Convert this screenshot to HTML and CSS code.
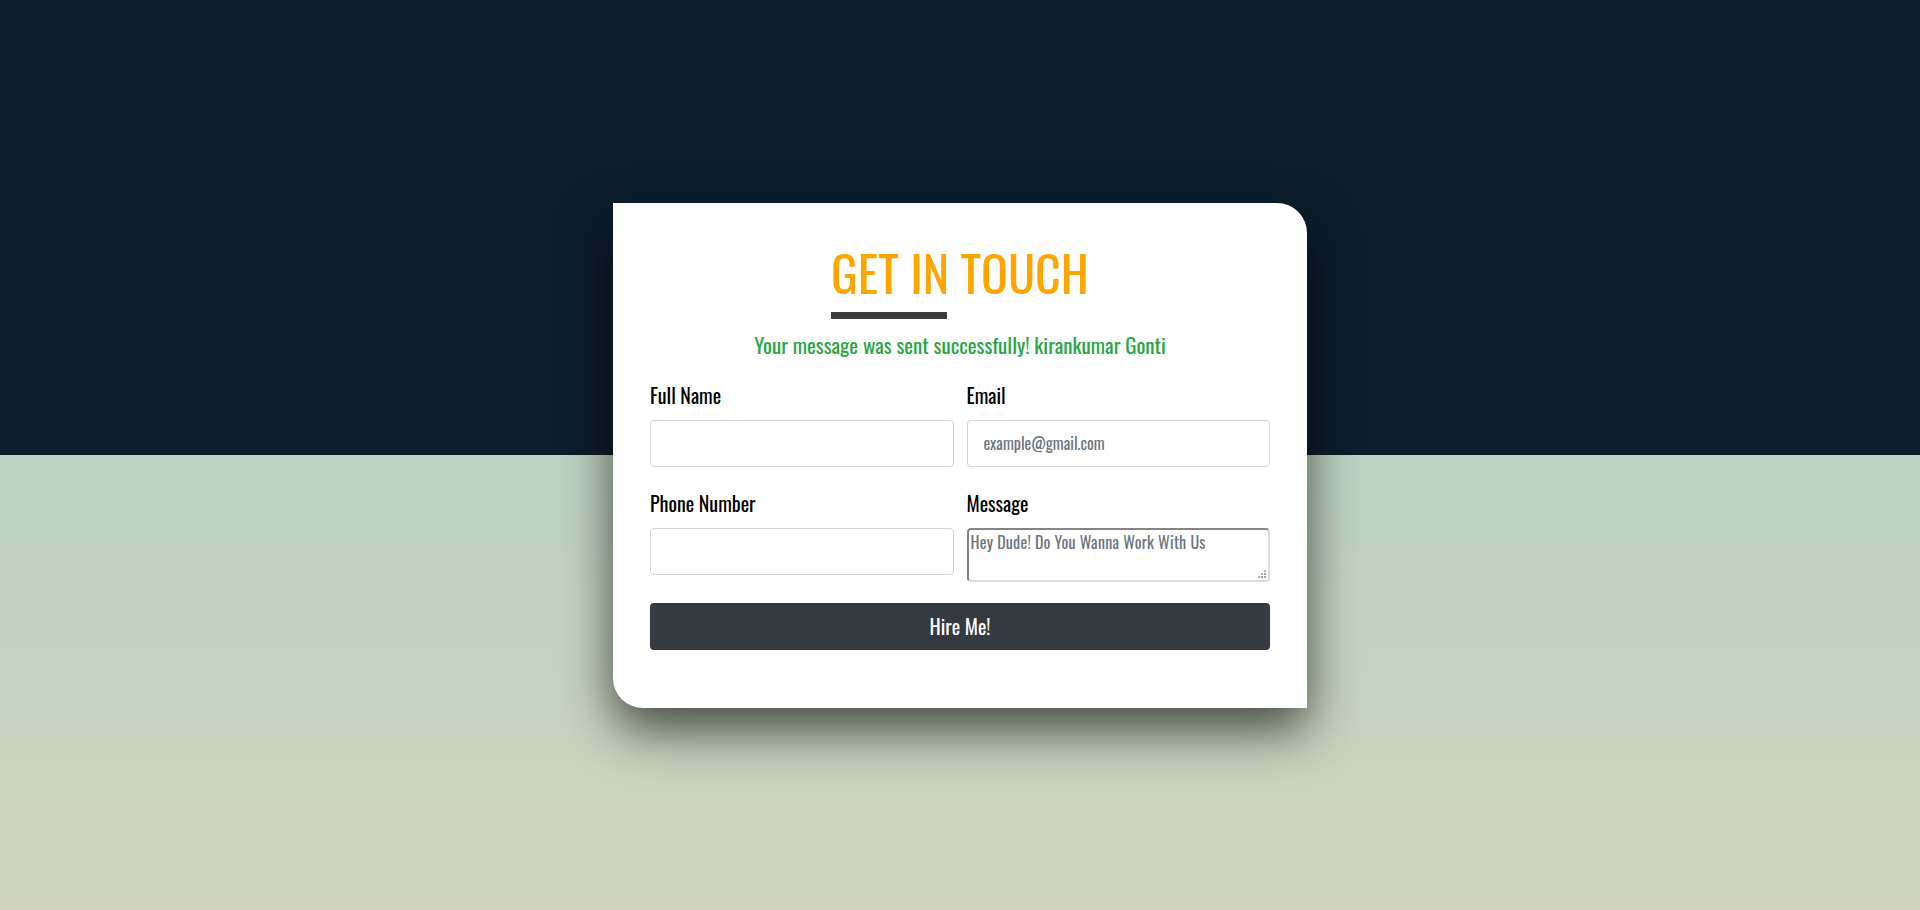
FILE: index.html
```html
<!DOCTYPE html>
<html lang="en">
<head>
<meta charset="utf-8">
<title>Get In Touch</title>
<link rel="stylesheet" href="styles.css">
</head>
<body>
<main class="page">
  <section class="card">
    <div class="heading">
      <div class="heading-inner">
        <h1 class="title">GET IN TOUCH</h1>
        <div class="bar"></div>
      </div>
    </div>
    <p class="success">Your message was sent successfully! kirankumar Gonti</p>
    <form class="form">
      <div class="field">
        <label class="label">Full Name</label>
        <input class="input" type="text">
      </div>
      <div class="field">
        <label class="label">Email</label>
        <input class="input" type="email" placeholder="example@gmail.com">
      </div>
      <div class="field">
        <label class="label">Phone Number</label>
        <input class="input" type="text">
      </div>
      <div class="field">
        <label class="label">Message</label>
        <div class="textarea-wrap">
          <textarea class="textarea" placeholder="Hey Dude! Do You Wanna Work With Us"></textarea>
          <svg class="grip" width="10" height="10" viewBox="0 0 10 10" aria-hidden="true">
            <rect x="8" y="2" width="2" height="2" fill="#b0b0b0"/>
            <rect x="5" y="5" width="2" height="2" fill="#b0b0b0"/>
            <rect x="8" y="5" width="2" height="2" fill="#a0a0a0"/>
            <rect x="2" y="8" width="2" height="2" fill="#b0b0b0"/>
            <rect x="5" y="8" width="2" height="2" fill="#a0a0a0"/>
            <rect x="8" y="8" width="2" height="2" fill="#a0a0a0"/>
          </svg>
        </div>
      </div>
      <button class="button" type="button">Hire Me!</button>
    </form>
  </section>
</main>
</body>
</html>
```

FILE: styles.css
```css
html, body {
  margin: 0;
  padding: 0;
}

body {
  font-family: "Oswald", "Liberation Sans Narrow", "DejaVu Sans Condensed", sans-serif;
  background: linear-gradient(to bottom, #0c1e2c 0, #0c1e2c 455px, #bcd3c3 455px, #cfd3bb 100%);
  min-height: 910px;
}

.page {
  height: 910px;
  display: flex;
  align-items: center;
  justify-content: center;
}

.card {
  width: 694px;
  box-sizing: border-box;
  background: #fff;
  padding: 36px 37px 58px 37px;
  border-radius: 0 30px 0 30px;
  box-shadow: 0 22px 50px rgba(0, 0, 0, 0.65);
}

.heading {
  text-align: center;
}

.heading-inner {
  display: inline-block;
  text-align: left;
}

.title {
  margin: 0;
  font-weight: 400;
  font-size: 50px;
  line-height: 64px;
  color: #ffa500;
}

.bar {
  width: 116px;
  height: 7px;
  background: #3d3a3a;
  margin-top: 9px;
}

.success {
  margin: 14px 0 0 0;
  text-align: center;
  color: #28a745;
  font-size: 21px;
  line-height: 24px;
}

.form {
  display: grid;
  grid-template-columns: 1fr 1fr;
  column-gap: 13px;
  row-gap: 24px;
  margin-top: 26px;
}

.field {
  display: flex;
  flex-direction: column;
  gap: 13px;
}

.label {
  font-size: 20px;
  line-height: 24px;
  color: #000;
}

.input {
  height: 47px;
  box-sizing: border-box;
  border: 1px solid #ced4da;
  border-radius: 4px;
  padding: 0 16px;
  font-family: inherit;
  font-size: 16px;
  color: #495057;
  background: #fff;
}

.input::placeholder,
.textarea::placeholder {
  color: #6c757d;
}

.textarea-wrap {
  position: relative;
  display: flex;
}

.textarea {
  flex: 1;
  height: 54px;
  box-sizing: border-box;
  border-width: 2px;
  border-style: solid;
  border-color: #858585 #dcdcdc #dcdcdc #858585;
  border-radius: 4px;
  padding: 2px 2px;
  font-family: inherit;
  font-size: 16px;
  line-height: 20px;
  letter-spacing: 0.25px;
  resize: none;
}

.grip {
  position: absolute;
  right: 4px;
  bottom: 4px;
}

.button {
  grid-column: 1 / 3;
  height: 47px;
  margin-top: -3px;
  border: none;
  border-radius: 4px;
  background: #343a40;
  color: #fff;
  font-family: inherit;
  font-size: 20px;
}
```
